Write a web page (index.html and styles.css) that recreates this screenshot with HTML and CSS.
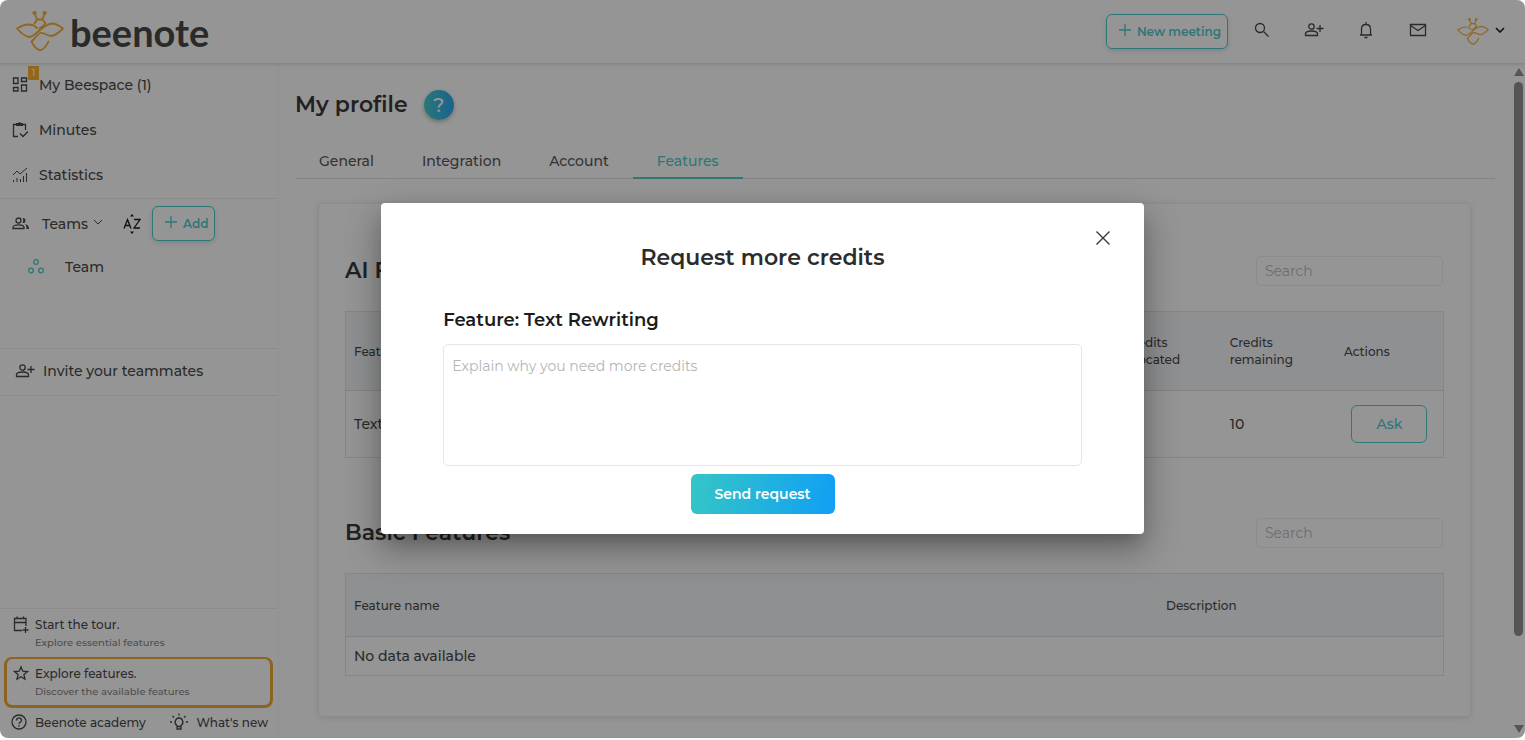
FILE: index.html
```html
<!DOCTYPE html>
<html lang="en">
  <head>
    <meta charset="UTF-8" />
    <meta name="viewport" content="width=device-width, initial-scale=1.0" />
    <title>Beenote - My profile</title>

    <link rel="stylesheet" href="styles.css">
  </head>
  <body>
    <!-- shared icons -->
    <svg class="icon-defs" aria-hidden="true">
      <symbol id="bee" viewBox="0 0 48 42">
        <circle cx="18.500" cy="2" r="1.200" />
        <circle cx="28.700" cy="2" r="1.200" />
        <path d="M19 3l2 5.500h5.500L28.300 3M18.500 12.500l2.500-4M26.500 8.500l3 3.500c-1 3-4 3.500-6 5.500" />
        <path d="M21 17C16 12 10 12 1 17.500C5 22 9 25.500 13 26C20 26 25 14 36 12.500C40 12.500 43 14.500 47 17.500C43 21.500 39 25 35 25C31 25 28 21 24.500 22C21.500 23 18.500 28 15.500 30.500L17 33C18 36 21 38 24 39.500C28 38 31 34 32.500 30.500" />
      </symbol>
      <symbol id="user-plus" viewBox="0 0 20 16">
        <circle cx="7.500" cy="4.500" r="2.700" />
        <path d="M1.500 13.500v-1.500c0-4 12-4 12 0v1.500zM16 3v7M12.500 6.500h7" />
      </symbol>
      <symbol id="plus" viewBox="0 0 12 12">
        <path d="M6 0v12M0 6h12" />
      </symbol>
      <symbol id="chevron" viewBox="0 0 10 6">
        <path d="M1 1l4 4l4-4" />
      </symbol>
    </svg>

    <div class="app">
      <header class="topbar">
        <a class="brand" href="#">
          <svg class="icon bee"><use href="#bee" /></svg>
          <span>beenote</span>
        </a>
        <div class="topbar-actions">
          <button class="btn btn-outline" type="button">
            <svg class="icon plus"><use href="#plus" /></svg>New meeting
          </button>
          <button class="icon-btn" type="button" aria-label="Search">
            <svg class="icon" width="16" height="16" viewBox="0 0 16 16"><circle cx="6" cy="6" r="4.500" /><path d="M9.500 9.500l5 5" /></svg>
          </button>
          <button class="icon-btn" type="button" aria-label="Invite">
            <svg class="icon user-plus"><use href="#user-plus" /></svg>
          </button>
          <button class="icon-btn" type="button" aria-label="Notifications">
            <svg class="icon" width="14" height="18" viewBox="0 0 14 18"><path d="M1 14h12M2.500 14V8c0-6 9-6 9 0v6M7 1v2M5.500 16.500h3" /></svg>
          </button>
          <button class="icon-btn" type="button" aria-label="Messages">
            <svg class="icon" width="18" height="14" viewBox="0 0 18 14"><path d="M1.500 1.500h15v11h-15zM1.500 2.500L9 7.500l7.500-5" /></svg>
          </button>
          <button class="account-btn" type="button" aria-label="Account">
            <svg class="icon bee bee-small"><use href="#bee" /></svg>
            <svg class="icon chevron"><use href="#chevron" /></svg>
          </button>
        </div>
      </header>

      <div class="layout">
        <aside class="sidebar">
          <nav>
            <a class="nav-item" href="#">
              <span class="nav-icon">
                <svg class="icon" width="16" height="16" viewBox="0 0 16 16"><path d="M1.500 1h4.500v5.500H1.500zM9.500 1h5v3.500h-5zM1.500 10.500h4.500v3.500H1.500zM9.500 8h5v6h-5z" /></svg>
                <span class="badge">1</span>
              </span>
              My Beespace (1)
            </a>
            <a class="nav-item" href="#">
              <span class="nav-icon">
                <svg class="icon" width="16" height="16" viewBox="0 0 16 16"><path d="M6 14.500H1.500v-12H4M11 2.500h2.500V8M8 11.500l3 3l5-5" /><path class="solid" d="M4 1h2l1.500-1L9 1h2v3H4z" /></svg>
              </span>
              Minutes
            </a>
            <a class="nav-item" href="#">
              <span class="nav-icon">
                <svg class="icon thin" width="16" height="16" viewBox="0 0 16 16"><path d="M1 8l4-4l3 3l7-6M1.500 13v2M5 11v4M8.500 12v3M11.500 9v6M14.500 6v9" /></svg>
              </span>
              Statistics
            </a>
          </nav>

          <section class="teams">
            <div class="teams-head">
              <span class="nav-icon">
                <svg class="icon" width="18" height="14" viewBox="0 0 18 14"><circle cx="6.500" cy="3.500" r="2.500" /><path d="M1 11.500v-1c0-3.500 11-3.500 11 0v1z" /><path class="solid" d="M10.500 1c4-1 4 6 0 5c1-1 1-4 0-5zM13 7.500c3 0 4 2 4 4.500h-2.500c0-2 0-3.500-1.500-4.500z" /></svg>
              </span>
              <button class="teams-toggle" type="button">
                Teams <svg class="icon thin chevron"><use href="#chevron" /></svg>
              </button>
              <button class="sort-btn" type="button" aria-label="Sort by name">
                <svg class="icon" width="18" height="20" viewBox="0 0 18 20"><path d="M1 14.500l3.500-9l3.500 9M2.500 11.500h4M11 5.500h6l-6 8.500h6" /><path class="solid" d="M7 2.500L9 0l2 2.500zM7 17.500L9 20l2-2.500z" /></svg>
              </button>
              <button class="btn btn-outline" type="button">
                <svg class="icon plus"><use href="#plus" /></svg>Add
              </button>
            </div>
            <a class="team" href="#">
              <svg class="icon" width="18" height="16" viewBox="0 0 18 16"><circle cx="9" cy="3" r="2.300" /><circle cx="4" cy="11.500" r="2.300" /><circle cx="14" cy="11.500" r="2.300" /></svg>
              Team
            </a>
          </section>

          <a class="invite" href="#">
            <svg class="icon user-plus"><use href="#user-plus" /></svg>
            Invite your teammates
          </a>

          <div class="help">
            <a class="help-item" href="#">
              <svg class="icon" width="16" height="18" viewBox="0 0 16 18"><path d="M9 14.500H1.500v-12H13V10M1.500 6.500H13M4 .5v2M10.500 .5v2M12.500 11v6M9.500 14h6" /></svg>
              <span>Start the tour.<small>Explore essential features</small></span>
            </a>
            <a class="help-item help-active" href="#">
              <svg class="icon" width="16" height="16" viewBox="0 0 16 16"><path d="M8 2l1.800 4.200l4.700.4l-3.600 3l1.100 4.600L8 11.700L4 14.200l1.100-4.600l-3.600-3l4.700-.4z" /></svg>
              <span>Explore features.<small>Discover the available features</small></span>
            </a>
            <div class="help-links">
              <a href="#">
                <svg class="icon" width="16" height="16" viewBox="0 0 16 16"><circle cx="8" cy="8" r="7" /><path d="M5.500 6.500c0-3.500 5-3.500 5 0c0 2-2.500 1.500-2.500 3.500M8 11v1.500" /></svg>
                Beenote academy
              </a>
              <a href="#">
                <svg class="icon" width="18" height="18" viewBox="0 0 18 18"><path d="M7 12.500c-4-3-1-7.500 2-7.500s6 4.500 2 7.500v3.500H7zM7 13.500h4M9 .5v2M0 9h2M16 9h2M2.500 3l1.500 1.500M15.500 3L14 4.500" /></svg>
                What's new
              </a>
            </div>
          </div>
        </aside>

        <main class="content">
          <div class="page-title">
            <h1>My profile</h1>
            <button class="help-btn" type="button" aria-label="Help">?</button>
          </div>

          <nav class="tabs">
            <a href="#">General</a>
            <a href="#">Integration</a>
            <a href="#">Account</a>
            <a class="active" href="#">Features</a>
          </nav>

          <div class="card">
            <section class="block">
              <div class="block-head">
                <h2>AI Features</h2>
                <input class="search" type="search" placeholder="Search" aria-label="Search AI features" />
              </div>
              <table class="ai-table">
                <thead>
                  <tr>
                    <th>Feature name</th>
                    <th class="col-allocated">Credits allocated</th>
                    <th class="col-remaining">Credits remaining</th>
                    <th class="col-actions">Actions</th>
                  </tr>
                </thead>
                <tbody>
                  <tr>
                    <td>Text Rewriting</td>
                    <td></td>
                    <td>10</td>
                    <td class="cell-action"><button class="btn-ask" type="button">Ask</button></td>
                  </tr>
                </tbody>
              </table>
            </section>

            <section class="block">
              <div class="block-head">
                <h2>Basic Features</h2>
                <input class="search" type="search" placeholder="Search" aria-label="Search basic features" />
              </div>
              <table class="basic-table">
                <thead>
                  <tr>
                    <th class="col-name">Feature name</th>
                    <th>Description</th>
                  </tr>
                </thead>
                <tbody>
                  <tr>
                    <td colspan="2">No data available</td>
                  </tr>
                </tbody>
              </table>
            </section>
          </div>
        </main>

        <div class="scrollbar" aria-hidden="true">
          <svg width="10" height="8" viewBox="0 0 10 8"><path d="M5 0l5 8H0z" /></svg>
          <div class="scroll-track"><div class="scroll-thumb"></div></div>
          <svg width="10" height="8" viewBox="0 0 10 8"><path d="M5 8L0 0h10z" /></svg>
        </div>
      </div>

      <div class="overlay">
        <form class="modal" role="dialog" aria-labelledby="modal-title">
          <button class="modal-close" type="button" aria-label="Close">
            <svg class="icon" width="14" height="14" viewBox="0 0 14 14"><path d="M.5 .5l13 13M13.500 .5l-13 13" /></svg>
          </button>
          <h2 id="modal-title">Request more credits</h2>
          <label for="reason">Feature: Text Rewriting</label>
          <textarea id="reason" placeholder="Explain why you need more credits"></textarea>
          <button class="btn-send" type="submit">Send request</button>
        </form>
      </div>
    </div>
  </body>
</html>
```

FILE: styles.css
```css
* {
  box-sizing: border-box;
}

body {
  margin: 0;
  background-color: #fff;
  color: #333;
  font-family: 'Montserrat', 'Inter', sans-serif;
  font-size: 14px;
  font-weight: 500;
}

a {
  color: inherit;
  text-decoration: none;
}

button,
input,
textarea {
  font-family: inherit;
  font-size: 14px;
}

button {
  padding: 0;
  border: none;
  background: none;
  color: inherit;
  font-weight: 500;
  cursor: pointer;
}

h1,
h2 {
  margin: 0;
  color: #222;
  font-size: 22px;
  font-weight: 600;
  line-height: 30px;
}

.icon-defs {
  position: absolute;
  width: 0;
  height: 0;
}

.icon {
  flex: none;
  fill: none;
  stroke: currentColor;
  stroke-width: 1.3;
}

.icon.thin {
  stroke-width: 1;
}

.icon .solid {
  fill: currentColor;
  stroke: none;
}

.plus {
  width: 12px;
  height: 12px;
}

.chevron {
  width: 10px;
  height: 6px;
}

.user-plus {
  width: 20px;
  height: 16px;
}

.bee {
  width: 48px;
  height: 42px;
  color: #f5a623;
  stroke-width: 1.8;
  stroke-linecap: round;
  stroke-linejoin: round;
}

.bee-small {
  width: 32px;
  height: 30px;
}

.app {
  display: flex;
  flex-direction: column;
  position: relative;
  height: calc(100vh - 2px);
  min-height: 738px;
  border-radius: 8px;
  overflow: hidden;
}

/* top bar */
.topbar {
  display: flex;
  align-items: center;
  justify-content: space-between;
  height: 63px;
  padding: 0 20px 0 16px;
  box-shadow: 0 1px 4px rgba(0, 0, 0, 0.2);
  z-index: 1;
}

.brand {
  display: flex;
  align-items: center;
  gap: 6px;
  font-family: 'Lato', sans-serif;
  font-size: 38px;
  font-weight: 700;
  line-height: 42px;
}

.topbar-actions {
  display: flex;
  align-items: center;
}

.btn {
  display: flex;
  align-items: center;
  gap: 6px;
  height: 35px;
  padding: 0 6px 0 12px;
  border-radius: 6px;
  font-size: 12px;
  font-weight: 600;
}

.btn .plus {
  margin-bottom: 3px;
}

.btn-outline {
  border: 1px solid #38c6c6;
  color: #38c6c6;
  box-shadow: 0 2px 5px rgba(0, 0, 0, 0.15);
}

.icon-btn {
  display: flex;
  justify-content: center;
  width: 52px;
  padding-bottom: 4px;
}

.topbar .btn {
  margin-right: 8px;
}

.account-btn {
  display: flex;
  align-items: center;
  gap: 6px;
  margin-left: 13px;
}

.account-btn .chevron {
  margin-bottom: 4px;
  color: #000;
  stroke-width: 1.6;
}

/* sidebar */
.layout {
  display: flex;
  flex: 1;
}

.sidebar {
  display: flex;
  flex-direction: column;
  width: 279px;
  border-right: 1px solid #f7f7f7;
}

.nav-item {
  display: flex;
  align-items: center;
  gap: 11px;
  height: 45px;
  padding: 0 0 2px 12px;
}

.nav-icon {
  display: flex;
  position: relative;
}

.badge {
  position: absolute;
  top: -11px;
  left: 16px;
  width: 11px;
  background-color: #fba71b;
  color: #fff;
  font-size: 10px;
  line-height: 14px;
  text-align: center;
}

.teams {
  min-height: 150px;
  border-top: 1px solid #ececec;
}

.teams-head {
  display: flex;
  align-items: center;
  height: 49px;
  padding-left: 12px;
}

.teams-toggle {
  display: flex;
  align-items: center;
  gap: 5px;
  margin: 0 20px 0 12px;
}

.teams-toggle .chevron {
  margin-bottom: 4px;
}

.sort-btn {
  display: flex;
  margin-right: 11px;
  color: #000;
}

.team {
  display: flex;
  align-items: center;
  gap: 20px;
  height: 38px;
  padding-left: 27px;
}

.team .icon {
  color: #38c6c6;
}

.invite {
  display: flex;
  align-items: center;
  gap: 8px;
  height: 48px;
  padding: 0 0 2px 15px;
  border-top: 1px solid #ececec;
  border-bottom: 1px solid #ececec;
}

.help {
  margin-top: auto;
  border-top: 1px solid #ececec;
  font-size: 12px;
}

.help-item {
  display: flex;
  gap: 6px;
  padding: 7px 13px 5px;
  line-height: 18px;
}

.help-item small {
  display: block;
  color: #777;
  font-size: 10px;
}

.help-active {
  margin: 0 5px 0 4px;
  padding: 6px 6px 4px;
  border: 3px solid #f0a020;
  border-top-width: 2px;
  border-radius: 8px;
}

.help-links {
  display: flex;
  justify-content: space-between;
  padding: 0 10px 2px 11px;
}

.help-links a {
  display: flex;
  align-items: center;
  gap: 8px;
  height: 28px;
}

/* page */
.content {
  flex: 1;
  padding: 27px 18px 0 16px;
}

.page-title {
  display: flex;
  align-items: center;
  gap: 16px;
}

.help-btn {
  width: 30px;
  height: 30px;
  border-radius: 50%;
  background-image: linear-gradient(90deg, #35c6c6, #109ff5);
  box-shadow: 0 2px 4px rgba(0, 0, 0, 0.3);
  color: #fff;
  font-size: 20px;
}

.tabs {
  display: flex;
  margin-top: 24px;
  border-bottom: 1px solid #ddd;
}

.tabs a {
  margin-bottom: -1px;
  padding: 2px 24px 0;
  border-bottom: 2px solid transparent;
  color: #444;
  line-height: 31px;
}

.tabs .active {
  border-color: #38c6c6;
  color: #38c6c6;
}

.card {
  display: flex;
  flex-direction: column;
  gap: 60px;
  margin: 24px 24px 0 23px;
  padding: 52px 26px 40px;
  border: 1px solid #eee;
  border-radius: 4px;
  box-shadow: 0 1px 6px rgba(0, 0, 0, 0.12);
}

.block-head {
  display: flex;
  align-items: center;
  justify-content: space-between;
  margin-bottom: 25px;
  padding-right: 1px;
}

.search {
  width: 187px;
  height: 30px;
  padding: 0 8px;
  border: 1px solid #ececec;
  border-radius: 5px;
  background: none;
}

::placeholder {
  color: #b3b5b8;
}

table {
  width: 100%;
  table-layout: fixed;
  border: 1px solid #e2e2e2;
  border-collapse: collapse;
}

th,
td {
  padding: 0 8px;
  text-align: left;
}

th {
  height: 63px;
  border-bottom: 1px solid #dcdcdc;
  background-color: #f3f5f8;
  font-size: 12px;
  font-weight: 500;
  line-height: 17px;
}

td {
  height: 39px;
}

.ai-table th {
  height: 79px;
}

.ai-table td {
  height: 67px;
}

.col-allocated {
  width: 9.6%;
}

.col-remaining {
  width: 10.4%;
}

.col-actions {
  width: 9.8%;
}

.basic-table .col-name {
  width: 74%;
}

.ai-table .cell-action {
  text-align: center;
}

.btn-ask {
  width: 76px;
  height: 38px;
  border: 1px solid #38c6c6;
  border-radius: 6px;
  color: #38c6c6;
}

.scrollbar {
  display: flex;
  flex-direction: column;
  align-items: center;
  gap: 6px;
  width: 12px;
  padding: 5px 1px 5px 0;
  fill: #858585;
}

.scroll-track {
  flex: 1;
  width: 9px;
}

.scroll-thumb {
  height: 87%;
  border-radius: 5px;
  background-color: #858585;
}

/* credits dialog */
.overlay {
  display: flex;
  align-items: center;
  justify-content: center;
  position: absolute;
  inset: 0;
  z-index: 2;
  padding-bottom: 2px;
  background-color: rgba(33, 33, 33, 0.48);
}

.modal {
  display: flex;
  flex-direction: column;
  position: relative;
  width: 50%;
  padding: 40px 62px 20px;
  border-radius: 4px;
  background-color: #fff;
  box-shadow: 0 11px 15px -7px rgba(0, 0, 0, 0.2), 0 14px 34px 3px rgba(0, 0, 0, 0.3);
}

.modal h2 {
  color: #2c2c2c;
  text-align: center;
}

.modal-close {
  display: flex;
  position: absolute;
  top: 28px;
  right: 34px;
}

.modal label {
  margin-top: 35px;
  color: #1c1c1c;
  font-size: 18px;
  font-weight: 600;
  line-height: 24px;
}

.modal textarea {
  height: 122px;
  margin-top: 12px;
  padding: 12px 8px;
  border: 1px solid #e6e6e6;
  border-radius: 5px;
  resize: none;
}

.btn-send {
  align-self: center;
  width: 144px;
  height: 40px;
  margin-top: 8px;
  border-radius: 6px;
  background-image: linear-gradient(100deg, #35c6c6, #109ff5);
  color: #fff;
  font-weight: 600;
}
```
